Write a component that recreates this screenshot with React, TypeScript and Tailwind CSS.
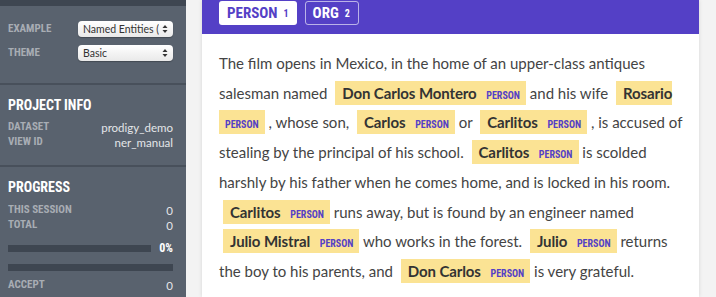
const purple = "#5440c6";
const cond = "font-['Roboto',sans-serif] font-stretch-condensed";

const Label = ({ children }: { children: React.ReactNode }) => (
  <span className={`${cond} font-bold uppercase text-[11px] text-[#a8adb4]`}>{children}</span>
);

const SelectBox = ({ value }: { value: string }) => (
  <div className="flex h-4 w-[95px] items-center justify-between rounded-[4px] bg-gradient-to-b from-white to-[#e9e9e9] pl-[5px] pr-[5px] shadow-[0_1px_1px_rgba(0,0,0,0.25)]">
    <span className="overflow-hidden whitespace-nowrap font-['Lato',sans-serif] text-[10.5px] leading-4 text-[#333]">{value}</span>
    <svg width="6" height="10" viewBox="0 0 6 10" className="ml-[3px] shrink-0">
      <path d="M3 1 L5.5 4 L0.5 4 Z" fill="#333" />
      <path d="M3 9 L5.5 6 L0.5 6 Z" fill="#333" />
    </svg>
  </div>
);

const InfoRow = ({ label, value }: { label: string; value: string }) => (
  <div className="flex h-[15px] items-center justify-between">
    <Label>{label}</Label>
    <span className="font-['Lato',sans-serif] text-[11.5px] text-[#e4e6e9]">{value}</span>
  </div>
);

const Sidebar = () => (
  <aside className="flex h-full w-[186px] shrink-0 flex-col bg-[#59626e]">
    <div className="h-[6px] bg-[#3e4651]" />

    <div className="flex flex-col gap-2 pl-2 pr-[13px] pt-[15px] pb-[22px]">
      <div className="flex h-4 items-center justify-between">
        <Label>Example</Label>
        <SelectBox value="Named Entities (" />
      </div>
      <div className="flex h-4 items-center justify-between">
        <Label>Theme</Label>
        <SelectBox value="Basic" />
      </div>
    </div>

    <div className="border-t-2 border-[#48505b] pl-2 pr-[13px] pt-3 pb-[15px]">
      <div className={`${cond} mb-[7px] h-4 text-[14px] font-bold uppercase leading-4 text-white`}>Project Info</div>
      <InfoRow label="Dataset" value="prodigy_demo" />
      <InfoRow label="View ID" value="ner_manual" />
    </div>

    <div className="border-t-2 border-[#48505b] pl-2 pr-[13px] pt-3">
      <div className={`${cond} mb-2 h-4 text-[14px] font-bold uppercase leading-4 text-white`}>Progress</div>
      <InfoRow label="This session" value="0" />
      <InfoRow label="Total" value="0" />
      <div className="mt-3 flex items-center gap-2">
        <div className="h-[7px] flex-1 bg-[#3e4651]" />
        <span className={`${cond} text-[12px] font-bold leading-[7px] text-white`}>0%</span>
      </div>
      <div className="mt-3 h-[7px] bg-[#3e4651]" />
      <div className="mt-[7px]">
        <InfoRow label="Accept" value="0" />
      </div>
    </div>
  </aside>
);

// entity mark: the name itself never wraps, but the label may drop to the next line
const Ent = ({ text }: { text: string }) => (
  <span className="ml-[4px] bg-[#fbe394] py-[3px] pl-[7px] pr-[6px] font-bold text-[#333]">
    <span className="whitespace-nowrap tracking-[-0.1px]">{text}</span>{" "}
    <span className={`${cond} ml-[6px] text-[10px] font-bold uppercase leading-none`} style={{ color: purple }}>
      person
    </span>
  </span>
);

export default function App() {
  return (
    <div className="flex h-[297px] w-[716px] overflow-hidden bg-[#f3f3f3]">
      <Sidebar />
      <div className="ml-4 w-[497px] shrink-0 bg-white shadow-[0_0_4px_rgba(0,0,0,0.12)]">
        <div className="flex h-[34px] items-start gap-2 pl-[17px] pt-[1px]" style={{ backgroundColor: purple }}>
          <div className={`${cond} flex h-6 items-center gap-[6px] rounded-[3px] bg-white pl-2 pr-[8px] font-bold`} style={{ color: purple }}>
            <span className="text-[15px]">PERSON</span>
            <span className="text-[10px]">1</span>
          </div>
          <div className={`${cond} flex h-6 items-center gap-[6px] rounded-[3px] border border-white/60 pl-[7px] pr-2 font-bold text-white`}>
            <span className="text-[15px]">ORG</span>
            <span className="text-[10px]">2</span>
          </div>
        </div>
        <p className="pl-[17px] pr-[12px] pt-[15px] font-['Lato',sans-serif] text-[15px] leading-[29.7px] text-[#444]">
          The film opens in Mexico, in the home of an upper-class antiques salesman named{" "}
          <Ent text="Don Carlos Montero" /> and his wife <Ent text="Rosario" /> , whose son,{" "}
          <Ent text="Carlos" /> or <Ent text="Carlitos" /> , is accused of stealing by the principal of
          his school. <Ent text="Carlitos" /> is scolded harshly by his father when he comes home, and is
          locked in his room. <Ent text="Carlitos" /> runs away, but is found by an engineer named{" "}
          <Ent text="Julio Mistral" /> who works in the forest. <Ent text="Julio" /> returns the boy to
          his parents, and <Ent text="Don Carlos" /> is very grateful.
        </p>
      </div>
    </div>
  );
}
